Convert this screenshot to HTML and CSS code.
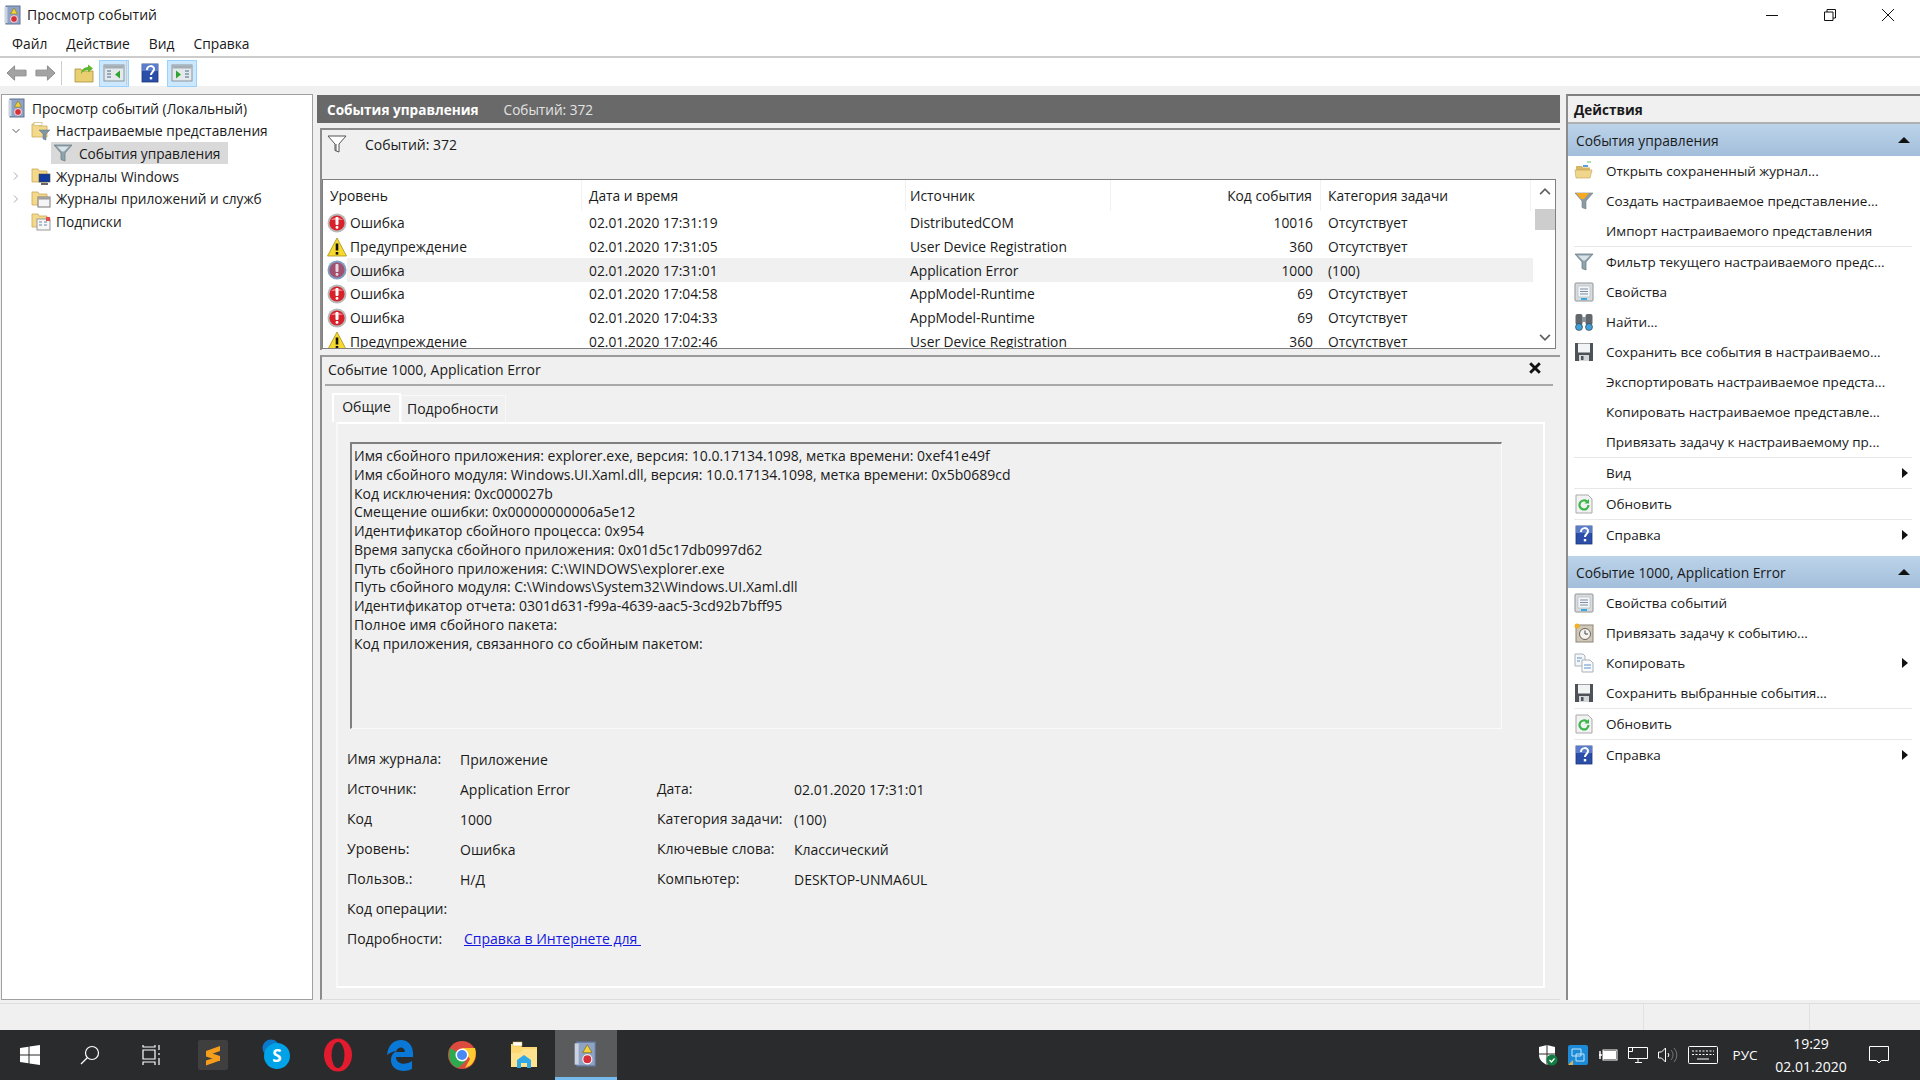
FILE: index.html
```html
<!DOCTYPE html>
<html lang="ru">
  <head>
    <meta charset="UTF-8" />
    <title>Просмотр событий</title>
    <link rel="stylesheet" href="styles.css">
  </head>
  <body>
    <svg class="defs" xmlns="http://www.w3.org/2000/svg">
      <symbol id="i-log" viewBox="0 0 18 20">
        <rect x="2" y="1" width="14" height="18" fill="#8fa3c4" stroke="#5f7396"/>
        <rect x="0.5" y="2" width="3" height="16" fill="#c9d2e0"/>
        <path d="M10 3l3.5 6h-7z" fill="#f4d23c" stroke="#7a6a10" stroke-width=".5"/>
        <circle cx="10" cy="14" r="3.4" fill="#d5303a" stroke="#fff" stroke-width=".8"/>
      </symbol>
      <symbol id="i-error" viewBox="0 0 20 20">
        <circle cx="10" cy="10" r="9.5" fill="#b9b9b9"/>
        <circle cx="10" cy="10" r="7.6" fill="#d7222c"/>
        <path d="M4 7a7 5 0 0 1 12 0z" fill="#ee7a7e"/>
        <rect x="8.5" y="4" width="3" height="8" rx="1" fill="#fff"/>
        <rect x="8.6" y="13" width="2.8" height="2.8" rx="1" fill="#fff"/>
      </symbol>
      <symbol id="i-error-sel" viewBox="0 0 20 20">
        <circle cx="10" cy="10" r="9.5" fill="#7f9cc0"/>
        <circle cx="10" cy="10" r="7.6" fill="#a3506f"/>
        <rect x="8.5" y="4" width="3" height="8" rx="1" fill="#e4d8e2"/>
        <rect x="8.6" y="13" width="2.8" height="2.8" rx="1" fill="#e4d8e2"/>
      </symbol>
      <symbol id="i-warn" viewBox="0 0 20 20">
        <path d="M10 1L19.5 19H.5z" fill="#f6d92f" stroke="#a78f18" stroke-width=".8"/>
        <rect x="8.7" y="6.5" width="2.6" height="7" fill="#111"/>
        <rect x="8.7" y="15" width="2.6" height="2.6" fill="#111"/>
      </symbol>
      <symbol id="i-funnel" viewBox="0 0 20 20">
        <path d="M1 2h18l-7 8v8l-4-1.5V10z" fill="#8fa3ad" stroke="#6f7f88" stroke-width=".8"/>
        <path d="M4 3.5h12l-5 5H9z" fill="#d9e3e8"/>
      </symbol>
      <symbol id="i-funnel-y" viewBox="0 0 20 20">
        <path d="M1 2h18l-7 8v8l-4-1.5V10z" fill="#8d9aa3" stroke="#6f7f88" stroke-width=".6"/>
        <path d="M2 2h13l-5 6H7z" fill="#f7a921"/>
      </symbol>
      <symbol id="i-funnel-o" viewBox="0 0 20 20">
        <path d="M1 2h18l-7 8v8l-4-1.5V10z" fill="#fff" stroke="#555" stroke-width="1"/>
        <path d="M9 10v7" stroke="#555"/>
      </symbol>
      <symbol id="i-folder-open" viewBox="0 0 20 20">
        <path d="M2 5h6l1 1.500h7V17H2z" fill="#d9b865"/>
        <path d="M1 9h17l-2 8H2z" fill="#f0d68c" stroke="#bf9f55" stroke-width=".6"/>
        <rect x="9" y="4" width="5" height="2" fill="#5aa0dc"/>
        <path d="M13 1h4" stroke="#5ac85a"/>
      </symbol>
      <symbol id="i-up" viewBox="0 0 20 20">
        <path d="M1 6h6l1 2h11v11H1z" fill="#e9cf70" stroke="#a88f3c" stroke-width=".8"/>
        <path d="M7 11c0-4 3-7 7-7V1.500l5 4-5 4V7c-3 0-5 1-7 4z" fill="#5fb52e"/>
      </symbol>
      <symbol id="i-pane-l" viewBox="0 0 22 20">
        <rect x="1" y="2" width="20" height="16" fill="#e4e9ec" stroke="#8a969d"/>
        <rect x="1.500" y="2.500" width="19" height="3" fill="#a3adb4"/>
        <path d="M4 8h4M4 11h4M4 14h4" stroke="#7d93ab" stroke-width="1.500"/>
        <path d="M17 7.500v8l-5-4z" fill="#2fa52f"/>
      </symbol>
      <symbol id="i-pane-r" viewBox="0 0 22 20">
        <rect x="1" y="2" width="20" height="16" fill="#e4e9ec" stroke="#8a969d"/>
        <rect x="1.500" y="2.500" width="19" height="3" fill="#a3adb4"/>
        <path d="M14 8h4M14 11h4M14 14h4" stroke="#7d93ab" stroke-width="1.500"/>
        <path d="M5 7.500v8l5-4z" fill="#2fa52f"/>
      </symbol>
      <symbol id="i-help" viewBox="0 0 18 20">
        <rect x="1" y="1" width="16" height="18" fill="#2b4fa8" stroke="#1c3578" stroke-width=".8"/>
        <path d="M1 1h16v7H1z" fill="#5a7ccb"/>
        <path d="M6 7c0-5 7-5 7-1 0 3-3 3-3 6" fill="none" stroke="#fff" stroke-width="2"/>
        <rect x="8.800" y="14" width="2.400" height="2.400" fill="#fff"/>
      </symbol>
      <symbol id="i-back" viewBox="0 0 22 18">
        <path d="M1 9l8-7.500V6h12v6H9v4.500z" fill="#a3a3a3" stroke="#8a8a8a"/>
      </symbol>
      <symbol id="i-fwd" viewBox="0 0 22 18">
        <path d="M21 9l-8-7.500V6H1v6h12v4.500z" fill="#a3a3a3" stroke="#8a8a8a"/>
      </symbol>
      <symbol id="i-props" viewBox="0 0 20 20">
        <rect x="1" y="1" width="18" height="18" rx="1" fill="#d9dcde" stroke="#8f9598"/>
        <rect x="4" y="4" width="12" height="11" fill="#f4f6f8" stroke="#b0b5b8" stroke-width=".6"/>
        <path d="M6 7h8M6 9.500h8M6 12h8" stroke="#7a8ea3"/>
        <rect x="7" y="16" width="6" height="2" fill="#3fa7e0"/>
      </symbol>
      <symbol id="i-find" viewBox="0 0 20 20">
        <rect x="1.500" y="2" width="7" height="11" rx="2" fill="#60686e"/>
        <rect x="11.500" y="2" width="7" height="11" rx="2" fill="#60686e"/>
        <rect x="8" y="5" width="4" height="5" fill="#8c9499"/>
        <circle cx="5" cy="15" r="3.500" fill="#3f9fd8" stroke="#333" stroke-width=".6"/>
        <circle cx="15" cy="15" r="3.500" fill="#3f9fd8" stroke="#333" stroke-width=".6"/>
      </symbol>
      <symbol id="i-save" viewBox="0 0 20 20">
        <path d="M1 1h18v18H1z" fill="#4d5358"/>
        <rect x="4" y="1.500" width="12" height="9" fill="#f2f3f4"/>
        <rect x="5" y="13" width="10" height="6" fill="#d4d7da"/>
        <rect x="7" y="14" width="2.500" height="4" fill="#4d5358"/>
      </symbol>
      <symbol id="i-refresh" viewBox="0 0 20 20">
        <path d="M2 1h12l4 4v14H2z" fill="#f2f2f2" stroke="#a9a9a9"/>
        <path d="M14.500 11a4.500 4.500 0 1 1-1.500-3.400" fill="none" stroke="#3cb54a" stroke-width="2.200"/>
        <path d="M15 5v4.500h-4.500z" fill="#3cb54a"/>
      </symbol>
      <symbol id="i-task" viewBox="0 0 20 20">
        <rect x="2" y="2" width="17" height="17" fill="#cfc8ba" stroke="#8d8577"/>
        <circle cx="11" cy="11" r="5.500" fill="#f5f3ee" stroke="#6b6459"/>
        <path d="M11 7.500V11h3" fill="none" stroke="#444"/>
        <circle cx="3" cy="3" r="2.500" fill="#f4b223"/>
      </symbol>
      <symbol id="i-copy" viewBox="0 0 20 20">
        <path d="M1 1h8l2 2v10H1z" fill="#f4f6f8" stroke="#a9b1b8"/>
        <path d="M8 7h8l3 3v9H8z" fill="#f9fbfc" stroke="#a9b1b8"/>
        <path d="M3 5h5M3 8h3M10 12h7M10 15h7" stroke="#5a93cc"/>
      </symbol>
      <symbol id="i-monitor" viewBox="0 0 20 20">
        <path d="M1 3h6l1 2h8v11H1z" fill="#f4d98b" stroke="#c9a95a" stroke-width=".8"/>
        <rect x="8" y="8" width="11" height="8" fill="#123a9c" stroke="#444" stroke-width=".6"/>
        <rect x="10" y="17" width="7" height="2" fill="#666"/>
      </symbol>
      <symbol id="i-window" viewBox="0 0 20 20">
        <path d="M1 3h6l1 2h8v11H1z" fill="#f4d98b" stroke="#c9a95a" stroke-width=".8"/>
        <rect x="7" y="8" width="12" height="10" fill="#f5f5f5" stroke="#777"/>
        <rect x="7.500" y="8.500" width="11" height="2" fill="#9a9a9a"/>
      </symbol>
      <symbol id="i-subs" viewBox="0 0 20 20">
        <path d="M1 3h6l1 2h8v11H1z" fill="#f4d98b" stroke="#c9a95a" stroke-width=".8"/>
        <rect x="6" y="8" width="13" height="11" fill="#f7f7f7" stroke="#999"/>
        <path d="M8 11h3M13 11h3M8 14h3M13 14h3" stroke="#6a87a8"/>
        <rect x="15" y="6" width="4" height="4" fill="#e05050"/>
      </symbol>
      <symbol id="i-folder-f" viewBox="0 0 20 20">
        <path d="M1 3h6l1 2h8v11H1z" fill="#f4d98b" stroke="#c9a95a" stroke-width=".8"/>
        <rect x="3" y="1.500" width="8" height="3" fill="#fff" stroke="#c9a95a" stroke-width=".6"/>
        <path d="M8 9h11l-4 4v6l-3-1v-5z" fill="#7e97a5" stroke="#5f7380" stroke-width=".5"/>
      </symbol>
    </svg>

    <div class="titlebar">
      <svg class="ico title-ico"><use href="#i-log"/></svg>
      <span class="title-text">Просмотр событий</span>
      <div class="win-btns">
        <svg class="win-btn" viewBox="0 0 12 12"><path d="M0 6.500h12" stroke="#111"/></svg>
        <svg class="win-btn" viewBox="0 0 12 12"><path d="M.5 3h8.500v8.500H.5zM3 3V.5h8.500V9H9" fill="none" stroke="#111"/></svg>
        <svg class="win-btn" viewBox="0 0 12 12"><path d="M0 0l12 12M12 0L0 12" stroke="#111"/></svg>
      </div>
    </div>
    <div class="menubar">
      <span>Файл</span><span>Действие</span><span>Вид</span><span>Справка</span>
    </div>
    <div class="toolbar">
      <svg class="tool-arrow"><use href="#i-back"/></svg>
      <svg class="tool-arrow"><use href="#i-fwd"/></svg>
      <i class="tool-sep"></i>
      <span class="tool-btn"><svg class="ico"><use href="#i-up"/></svg></span>
      <span class="tool-btn on"><svg class="ico ico-pane"><use href="#i-pane-l"/></svg></span>
      <i class="tool-sep"></i>
      <span class="tool-btn help"><svg class="ico ico-help"><use href="#i-help"/></svg></span>
      <span class="tool-btn on"><svg class="ico ico-pane"><use href="#i-pane-r"/></svg></span>
    </div>

    <div class="main">
      <div class="tree">
        <div class="node root"><svg class="ico"><use href="#i-log"/></svg><span>Просмотр событий (Локальный)</span></div>
        <div class="node lvl1"><svg class="caret" viewBox="0 0 10 10"><path d="M1.500 3l3.500 3.500L8.500 3" fill="none" stroke="#555"/></svg><svg class="ico"><use href="#i-folder-f"/></svg><span>Настраиваемые представления</span></div>
        <div class="node lvl2"><div class="node-sel"><svg class="ico"><use href="#i-funnel"/></svg><span>События управления</span></div></div>
        <div class="node lvl1"><svg class="caret" viewBox="0 0 10 10"><path d="M3 1.500L6.500 5 3 8.500" fill="none" stroke="#aaa"/></svg><svg class="ico"><use href="#i-monitor"/></svg><span>Журналы Windows</span></div>
        <div class="node lvl1"><svg class="caret" viewBox="0 0 10 10"><path d="M3 1.500L6.500 5 3 8.500" fill="none" stroke="#aaa"/></svg><svg class="ico"><use href="#i-window"/></svg><span>Журналы приложений и служб</span></div>
        <div class="node lvl1"><svg class="caret" viewBox="0 0 10 10"></svg><svg class="ico"><use href="#i-subs"/></svg><span>Подписки</span></div>
      </div>

      <div class="center">
        <div class="center-head"><b>События управления</b><span>Событий: 372</span></div>
        <div class="center-body">
          <div class="upper">
            <div class="filter-bar"><svg class="ico"><use href="#i-funnel-o"/></svg><span>Событий: 372</span></div>
            <div class="events">
              <div class="events-list">
                <div class="ev-row ev-head">
                  <div>Уровень</div><div>Дата и время</div><div class="src-head">Источник</div><div class="num">Код события</div><div>Категория задачи</div>
                </div>
                <div class="ev-row"><div class="lvl"><svg class="ico"><use href="#i-error"/></svg>Ошибка</div><div>02.01.2020 17:31:19</div><div>DistributedCOM</div><div class="num">10016</div><div>Отсутствует</div></div>
                <div class="ev-row"><div class="lvl"><svg class="ico"><use href="#i-warn"/></svg>Предупреждение</div><div>02.01.2020 17:31:05</div><div>User Device Registration</div><div class="num">360</div><div>Отсутствует</div></div>
                <div class="ev-row sel"><div class="lvl"><svg class="ico"><use href="#i-error-sel"/></svg>Ошибка</div><div>02.01.2020 17:31:01</div><div>Application Error</div><div class="num">1000</div><div>(100)</div></div>
                <div class="ev-row"><div class="lvl"><svg class="ico"><use href="#i-error"/></svg>Ошибка</div><div>02.01.2020 17:04:58</div><div>AppModel-Runtime</div><div class="num">69</div><div>Отсутствует</div></div>
                <div class="ev-row"><div class="lvl"><svg class="ico"><use href="#i-error"/></svg>Ошибка</div><div>02.01.2020 17:04:33</div><div>AppModel-Runtime</div><div class="num">69</div><div>Отсутствует</div></div>
                <div class="ev-row"><div class="lvl"><svg class="ico"><use href="#i-warn"/></svg>Предупреждение</div><div>02.01.2020 17:02:46</div><div>User Device Registration</div><div class="num">360</div><div>Отсутствует</div></div>
              </div>
              <div class="scroll">
                <svg class="scroll-arrow" viewBox="0 0 10 10"><path d="M1.500 6.500L5 3l3.500 3.500" fill="none" stroke="#606060" stroke-width="1.200"/></svg>
                <div class="scroll-thumb"></div>
                <div class="scroll-track"></div>
                <svg class="scroll-arrow" viewBox="0 0 10 10"><path d="M1.500 3.500L5 7l3.500-3.500" fill="none" stroke="#606060" stroke-width="1.200"/></svg>
              </div>
            </div>
          </div>

          <div class="detail">
            <div class="detail-head">
              <span>Событие 1000, Application Error</span>
              <svg class="close" viewBox="0 0 10 10"><path d="M1 1l8 8M9 1L1 9" stroke="#111" stroke-width="2.400"/></svg>
            </div>
            <div class="tabs"><span class="tab active">Общие</span><span class="tab">Подробности</span></div>
            <div class="tab-body">
              <div class="msg">
                <div>Имя сбойного приложения: explorer.exe, версия: 10.0.17134.1098, метка времени: 0xef41e49f</div>
                <div>Имя сбойного модуля: Windows.UI.Xaml.dll, версия: 10.0.17134.1098, метка времени: 0x5b0689cd</div>
                <div>Код исключения: 0xc000027b</div>
                <div>Смещение ошибки: 0x00000000006a5e12</div>
                <div>Идентификатор сбойного процесса: 0x954</div>
                <div>Время запуска сбойного приложения: 0x01d5c17db0997d62</div>
                <div>Путь сбойного приложения: C:\WINDOWS\explorer.exe</div>
                <div>Путь сбойного модуля: C:\Windows\System32\Windows.UI.Xaml.dll</div>
                <div>Идентификатор отчета: 0301d631-f99a-4639-aac5-3cd92b7bff95</div>
                <div>Полное имя сбойного пакета:</div>
                <div>Код приложения, связанного со сбойным пакетом:</div>
              </div>
              <div class="fields">
                <label>Имя журнала:</label><span>Приложение</span><label></label><span></span>
                <label>Источник:</label><span>Application Error</span><label>Дата:</label><span>02.01.2020 17:31:01</span>
                <label>Код</label><span>1000</span><label>Категория задачи:</label><span>(100)</span>
                <label>Уровень:</label><span>Ошибка</span><label>Ключевые слова:</label><span>Классический</span>
                <label>Пользов.:</label><span>Н/Д</span><label>Компьютер:</label><span>DESKTOP-UNMA6UL</span>
                <label>Код операции:</label><span></span><label></label><span></span>
                <label>Подробности:</label><a class="link" href="#">Справка в Интернете для </a>
              </div>
            </div>
          </div>
        </div>
      </div>

      <div class="actions">
        <div class="actions-head">Действия</div>
        <div class="act-bar">События управления<i class="tri-up"></i></div>
        <div class="act"><svg class="ico"><use href="#i-folder-open"/></svg>Открыть сохраненный журнал...</div>
        <div class="act"><svg class="ico"><use href="#i-funnel-y"/></svg>Создать настраиваемое представление...</div>
        <div class="act"><i class="ico"></i>Импорт настраиваемого представления</div>
        <hr>
        <div class="act"><svg class="ico"><use href="#i-funnel"/></svg>Фильтр текущего настраиваемого предс...</div>
        <div class="act"><svg class="ico"><use href="#i-props"/></svg>Свойства</div>
        <div class="act"><svg class="ico"><use href="#i-find"/></svg>Найти...</div>
        <div class="act"><svg class="ico"><use href="#i-save"/></svg>Сохранить все события в настраиваемо...</div>
        <div class="act"><i class="ico"></i>Экспортировать настраиваемое предста...</div>
        <div class="act"><i class="ico"></i>Копировать настраиваемое представле...</div>
        <div class="act"><i class="ico"></i>Привязать задачу к настраиваемому пр...</div>
        <hr>
        <div class="act"><i class="ico"></i>Вид<i class="tri-right"></i></div>
        <hr>
        <div class="act"><svg class="ico"><use href="#i-refresh"/></svg>Обновить</div>
        <hr>
        <div class="act"><svg class="ico"><use href="#i-help"/></svg>Справка<i class="tri-right"></i></div>
        <div class="act-bar second">Событие 1000, Application Error<i class="tri-up"></i></div>
        <div class="act"><svg class="ico"><use href="#i-props"/></svg>Свойства событий</div>
        <div class="act"><svg class="ico"><use href="#i-task"/></svg>Привязать задачу к событию...</div>
        <div class="act"><svg class="ico"><use href="#i-copy"/></svg>Копировать<i class="tri-right"></i></div>
        <div class="act"><svg class="ico"><use href="#i-save"/></svg>Сохранить выбранные события...</div>
        <hr>
        <div class="act"><svg class="ico"><use href="#i-refresh"/></svg>Обновить</div>
        <hr>
        <div class="act"><svg class="ico"><use href="#i-help"/></svg>Справка<i class="tri-right"></i></div>
      </div>
    </div>

    <div class="statusbar"><div class="st1"></div><div class="st2"></div><div></div></div>

    <div class="taskbar">
      <div class="tb tb-start"><svg width="20" height="20" viewBox="0 0 20 20"><path d="M0 3l8.500-1.300v7.800H0zM9.500 1.500L20 0v9.500H9.500zM0 10.500h8.500v7.800L0 17zM9.500 10.500H20V20L9.500 18.500z" fill="#fff"/></svg></div>
      <div class="tb"><svg width="20" height="20" viewBox="0 0 20 20"><circle cx="12" cy="8" r="6.500" fill="none" stroke="#fff" stroke-width="1.200"/><path d="M7.500 12.500L1 19" stroke="#fff" stroke-width="1.200"/></svg></div>
      <div class="tb tb-view"><svg width="20" height="20" viewBox="0 0 20 20"><path d="M1 0v2h12V0M1 5h12v9H1zM1 20v-3h12v3M17 0v5M17 8v2M17 13v7" fill="none" stroke="#fff" stroke-width="1.200"/></svg></div>
      <div class="tb"><svg width="30" height="30" viewBox="0 0 30 30"><rect width="30" height="30" rx="2" fill="#3f3f3f"/><path d="M22 6L8 11v5l14-5zM8 11.500v5l14 4.500v-5zM22 16L8 20.500v5l14-5z" fill="#f59e1b"/></svg></div>
      <div class="tb tb-skype"><svg width="28" height="32" viewBox="0 0 28 32"><circle cx="9" cy="9" r="8.500" fill="#0b78c9"/><circle cx="15" cy="17" r="13" fill="#00a3e8"/><text x="15" y="23" class="skype">S</text></svg></div>
      <div class="tb"><svg width="28" height="34" viewBox="0 0 28 34"><ellipse cx="14" cy="17" rx="14" ry="16.500" fill="#e31b2e"/><ellipse cx="14" cy="17" rx="6.500" ry="13" fill="#2b2b2d"/></svg></div>
      <div class="tb"><svg width="28" height="32" viewBox="0 0 28 32"><path d="M1 16C2 6 8 1 15 1c8 0 13 7 12 17H10c0 7 9 9 16 4v8c-8 4-21 2-21-9 0-5 3-8 6-9 0 0-5 0-10 4zM10 13h9c0-6-8-6-9 0z" fill="#0a78d7"/></svg></div>
      <div class="tb"><svg width="28" height="28" viewBox="0 0 28 28"><circle cx="14" cy="14" r="14" fill="#dd4b3e"/><path d="M14 14L1.900 7 1 14c0 6 3 11 9 13l8-7z" fill="#2da94f"/><path d="M14 7h13c2 6 0 13-4 17l-6 3 5-9z" fill="#fdcb2e"/><circle cx="14" cy="14" r="6.500" fill="#fff"/><circle cx="14" cy="14" r="5" fill="#4a89f3"/></svg></div>
      <div class="tb"><svg width="28" height="28" viewBox="0 0 28 28"><path d="M1 3h9l2 3h15v20H1z" fill="#fbd871"/><rect x="3" y="1" width="9" height="4" fill="#fff" stroke="#d9b34d" stroke-width=".5"/><path d="M14 8h13v18H1V12h9z" fill="#fee28d"/><path d="M7 19l7-5 7 5v8h-4v-5h-6v5H7z" fill="#2fa9e8"/></svg></div>
      <div class="tb active"><svg class="ico-big"><use href="#i-log"/></svg></div>
      <div class="tray">
        <div class="tr"><svg width="20" height="22" viewBox="0 0 20 22"><path d="M1 3l8-2 8 2v8c0 5-4 8-8 10-4-2-8-5-8-10z" fill="#fff"/><path d="M9 1v20M1 10h16" stroke="#2b2b2d"/><circle cx="14" cy="16" r="5.500" fill="#107c41"/><path d="M11.500 16l2 2 3-3.500" fill="none" stroke="#fff" stroke-width="1.200"/></svg></div>
        <div class="tr"><svg width="20" height="20" viewBox="0 0 20 20"><rect width="20" height="20" rx="2" fill="#1c8ad6"/><path d="M4 4h9v7H4zM8 9h8v7H8z" fill="none" stroke="#bfe3fa"/><path d="M0 20l5-5v5z" fill="#d9b34d"/></svg></div>
        <div class="tr"><svg width="20" height="14" viewBox="0 0 20 14"><path d="M1 7h3M2 3v8" stroke="#fff" stroke-width="1.500"/><rect x="5" y="2" width="14" height="10" fill="none" stroke="#fff"/><rect x="5" y="3" width="13" height="8" fill="#fff"/></svg></div>
        <div class="tr"><svg width="20" height="18" viewBox="0 0 20 18"><path d="M.5 1.500h19v11H.5zM7 16.500h7M10 13v3M.5 1.500h4v4h-4z" fill="none" stroke="#fff"/></svg></div>
        <div class="tr"><svg width="20" height="18" viewBox="0 0 20 18"><path d="M.5 6h3l4-4v14l-4-4h-3z" fill="none" stroke="#fff"/><path d="M10 7a3 3 0 0 1 0 4" fill="none" stroke="#fff"/><path d="M13 4a7 7 0 0 1 0 10M16 2a10 10 0 0 1 0 14" fill="none" stroke="#777"/></svg></div>
        <div class="tr tr-kb"><svg width="30" height="18" viewBox="0 0 30 18"><rect x=".5" y=".5" width="29" height="17" rx="1" fill="none" stroke="#fff"/><path d="M4 5h22M4 8.500h22" stroke="#fff" stroke-dasharray="2 1.500"/><path d="M9 13h12" stroke="#fff"/></svg></div>
        <div class="tr tr-lang">РУС</div>
        <div class="clock"><span>19:29</span><span>02.01.2020</span></div>
        <div class="tr tr-note"><svg width="20" height="20" viewBox="0 0 20 20"><path d="M.5 1.500h19v14h-7l-2.500 2.500-2.500-2.500h-7z" fill="none" stroke="#fff"/></svg></div>
      </div>
    </div>
  </body>
</html>
```

FILE: styles.css
```css
* {
  box-sizing: border-box;
}

body {
  margin: 0;
  width: 1920px;
  height: 1080px;
  overflow: hidden;
  display: flex;
  flex-direction: column;
  font-family: "Open Sans", "Noto Sans", sans-serif;
  font-size: 14px;
  color: #1a1a1a;
  background: #f0f0f0;
}

.defs {
  width: 0;
  height: 0;
  flex: none;
}

.ico {
  width: 20px;
  height: 20px;
  display: block;
  flex: none;
}

/* title, menu, toolbar */
.titlebar {
  height: 30px;
  flex: none;
  display: flex;
  align-items: center;
  background: white;
  padding-left: 3px;
}

.title-text {
  margin-left: 4px;
  margin-bottom: 2px;
  font-size: 14px;
}

.win-btns {
  margin-left: auto;
  display: flex;
  gap: 46px;
  padding-right: 26px;
}

.win-btn {
  width: 12px;
  height: 12px;
}

.menubar {
  height: 28px;
  flex: none;
  display: flex;
  align-items: center;
  padding-left: 12px;
  gap: 19px;
  font-size: 13.8px;
  background: white;
  border-bottom: 2px solid #ccc;
}

.toolbar {
  height: 28px;
  flex: none;
  display: flex;
  align-items: center;
  padding: 2px 0 0 6px;
  background: white;
}

.tool-arrow {
  width: 21px;
  height: 18px;
  margin-right: 8px;
}

.tool-sep {
  width: 1px;
  height: 24px;
  background: #ccc;
  margin: 0 7px 0 -3px;
}

.tool-sep + .tool-btn.help {
  margin-left: 5px;
}

.tool-btn {
  width: 30px;
  height: 27px;
  display: flex;
  align-items: center;
  justify-content: center;
  border: 1px solid transparent;
}

.tool-btn.on {
  background: #cce8ff;
  border-color: #99d1ff;
}

.tool-btn.help {
  margin-right: 6px;
  width: 22px;
}

.ico-pane {
  width: 22px;
}

/* panes */
.main {
  height: 917px;
  flex: none;
  display: flex;
  padding-top: 8px;
  padding-bottom: 3px;
}

.tree {
  width: 312px;
  margin-left: 1px;
  background: white;
  border: 1px solid #a0a0a0;
  padding-top: 2px;
  font-size: 13.7px;
}

.node {
  height: 22.6px;
  display: flex;
  align-items: center;
  gap: 5px;
  padding-left: 7px;
  white-space: nowrap;
}

.root {
  padding-left: 5px;
}

.lvl1 {
  padding-left: 9px;
}

.caret {
  width: 10px;
  height: 10px;
  margin-right: 5px;
}

.lvl2 {
  padding-left: 49px;
}

.node-sel {
  height: 22px;
  width: 177px;
  display: flex;
  align-items: center;
  gap: 6px;
  padding-left: 2px;
  background: #d9d9d9;
}

.center {
  width: 1243px;
  margin-left: 4px;
  display: flex;
  flex-direction: column;
}

.center-head {
  height: 28px;
  margin-top: 1px;
  flex: none;
  display: flex;
  align-items: center;
  padding-left: 10px;
  gap: 25px;
  font-size: 13.6px;
  background: #696969;
  color: #e4e4e4;
}

.center-head b {
  color: white;
}

.center-body {
  flex: 1;
  padding-left: 3px;
  display: flex;
  flex-direction: column;
}

.upper {
  margin-top: 5px;
  height: 222px;
  flex: none;
  border-top: 2px solid #8c8c8c;
  border-left: 2px solid #8c8c8c;
  display: flex;
  flex-direction: column;
}

.filter-bar {
  height: 49px;
  flex: none;
  display: flex;
  align-items: flex-start;
  padding: 4px 0 0 5px;
  gap: 18px;
}

.filter-bar span {
  margin-top: 1px;
}

.events {
  height: 170px;
  width: 1234px;
  display: flex;
  font-size: 13.8px;
  background: white;
  border: 1px solid #808080;
  overflow: hidden;
}

.events-list {
  width: 1210px;
  flex: none;
}

.ev-row {
  height: 23.7px;
  display: grid;
  grid-template-columns: 259px 324px 205px 210px 210px;
  align-items: center;
  white-space: nowrap;
}

.ev-row > div {
  padding-left: 7px;
}

.ev-row > div:nth-child(3) {
  padding-left: 4px;
}

.ev-row .num {
  padding: 0 8px 0 0;
  text-align: right;
}

.ev-row.sel {
  background: linear-gradient(to right, white 24px, #f0f0f0 24px);
}

.ev-head {
  height: 31px;
}

.ev-head > div {
  height: 31px;
  line-height: 32px;
  border-right: 1px solid #f2f2f2;
}

.ev-row > .src-head {
  padding-left: 38px;
}

.ev-row > .lvl {
  display: flex;
  align-items: center;
  gap: 3px;
  padding-left: 4px;
}

.scroll {
  width: 22px;
  margin-left: 1px;
  display: flex;
  flex-direction: column;
  align-items: center;
}

.scroll-arrow {
  width: 14px;
  height: 14px;
  margin: 5px 0 10px;
  flex: none;
}

.scroll-arrow:last-child {
  margin: 0 0 4px;
}

.scroll-thumb {
  width: 20px;
  height: 21px;
  flex: none;
  background: #cdcdcd;
}

.scroll-track {
  flex: 1;
}

.detail {
  margin-top: 5px;
  flex: 1;
  border-top: 2px solid #9a9a9a;
  border-left: 2px solid #8c8c8c;
  border-bottom: 1px solid #dcdcdc;
  padding-right: 4px;
  padding-bottom: 11px;
  display: flex;
  flex-direction: column;
}

.detail-head {
  height: 29px;
  flex: none;
  margin: 0 3px 0 3px;
  padding: 0 0 2px 3px;
  display: flex;
  align-items: center;
  justify-content: space-between;
  border-bottom: 2px solid #a8a8a8;
}

.close {
  width: 12px;
  height: 12px;
  margin: 0 12px 3px 0;
}

.tabs {
  display: flex;
  flex: none;
  margin: 7px 0 0 10px;
  height: 29px;
  align-items: flex-end;
}

.tab {
  height: 27px;
  padding: 0 7px 0 5px;
  line-height: 26px;
  border: 1px solid #f8f8f8;
  border-bottom: none;
}

.tab.active {
  height: 29px;
  width: 69px;
  padding: 0;
  text-align: center;
  line-height: 24px;
  border: 2px solid white;
  border-bottom: none;
}

.tab-body {
  flex: 1;
  margin-left: 14px;
  width: 1209px;
  border: 2px solid white;
  border-left-color: #f8f8f8;
  padding: 18px 0 0 12px;
}

.msg {
  width: 1152px;
  height: 287px;
  padding: 3px 0 0 2px;
  line-height: 18.75px;
  border-top: 2px solid #808080;
  border-left: 2px solid #808080;
  border-bottom: 1px solid #fafafa;
  border-right: 1px solid #fafafa;
  white-space: nowrap;
}

.fields {
  margin: 15px 0 0 -3px;
  display: grid;
  grid-template-columns: 113px 197px 137px 300px;
  grid-auto-rows: 30px;
  align-items: center;
  white-space: nowrap;
}

.fields label {
  padding-bottom: 1px;
}

.link {
  grid-column: span 3;
  padding-left: 4px;
  padding-bottom: 1px;
  color: #1616e0;
  white-space: pre;
}

.actions {
  width: 354px;
  margin-left: 6px;
  font-size: 13.5px;
  background: white;
  border-top: 2px solid #808080;
  border-left: 2px solid #8c8c8c;
  white-space: nowrap;
}

.actions-head {
  height: 28px;
  padding-left: 6px;
  line-height: 29px;
  font-weight: bold;
  background: #f0f0f0;
  border-bottom: 2px solid #b0b0b0;
}

.act-bar {
  height: 32px;
  display: flex;
  align-items: center;
  justify-content: space-between;
  padding: 0 10px 0 8px;
  font-size: 13.8px;
  background: linear-gradient(#bcd4ea, #a3bedb);
}

.act-bar.second {
  margin-top: 6px;
}

.tri-up {
  border: 6px solid transparent;
  border-top: none;
  border-bottom: 6px solid #111;
}

.tri-right {
  margin-left: auto;
  margin-right: 12px;
  border: 5.5px solid transparent;
  border-right: none;
  border-left: 6px solid #111;
}

.act {
  height: 30px;
  display: flex;
  align-items: center;
  gap: 12px;
  padding-left: 6px;
}

hr {
  height: 1px;
  margin: 0 8px 0 6px;
  border: none;
  background: #e8e8e8;
}

/* status and taskbar */
.statusbar {
  height: 27px;
  flex: none;
  display: flex;
  background: #f0f0f0;
  border-top: 1px solid #dedede;
}

.st1 {
  width: 1644px;
  border-right: 1px solid #e2e2e2;
}

.st2 {
  width: 166px;
  border-right: 1px solid #e2e2e2;
}

.taskbar {
  height: 50px;
  flex: none;
  display: flex;
  background: #2a2b2d;
  color: white;
}

.tb {
  width: 62px;
  display: flex;
  align-items: center;
  justify-content: center;
}

.tb-start {
  width: 59px;
}

.tb-view {
  width: 61px;
}

.tb-skype {
  width: 63px;
}

.tb.active {
  background: #5a5b5d;
  border-bottom: 3px solid #76b9ed;
}

.ico-big {
  width: 24px;
  height: 30px;
}

.skype {
  font-family: "Open Sans", sans-serif;
  font-size: 17px;
  font-weight: bold;
  fill: white;
  text-anchor: middle;
}

.tray {
  margin-left: auto;
  padding-right: 17px;
  display: flex;
  align-items: center;
}

.tr {
  width: 30px;
  display: flex;
  justify-content: center;
}

.tr-kb {
  width: 40px;
}

.tr-lang {
  width: 44px;
  font-size: 13.5px;
}

.clock {
  width: 88px;
  display: flex;
  flex-direction: column;
  align-items: center;
  line-height: 23px;
  font-size: 14px;
}

.tr-note {
  width: 48px;
}
```
